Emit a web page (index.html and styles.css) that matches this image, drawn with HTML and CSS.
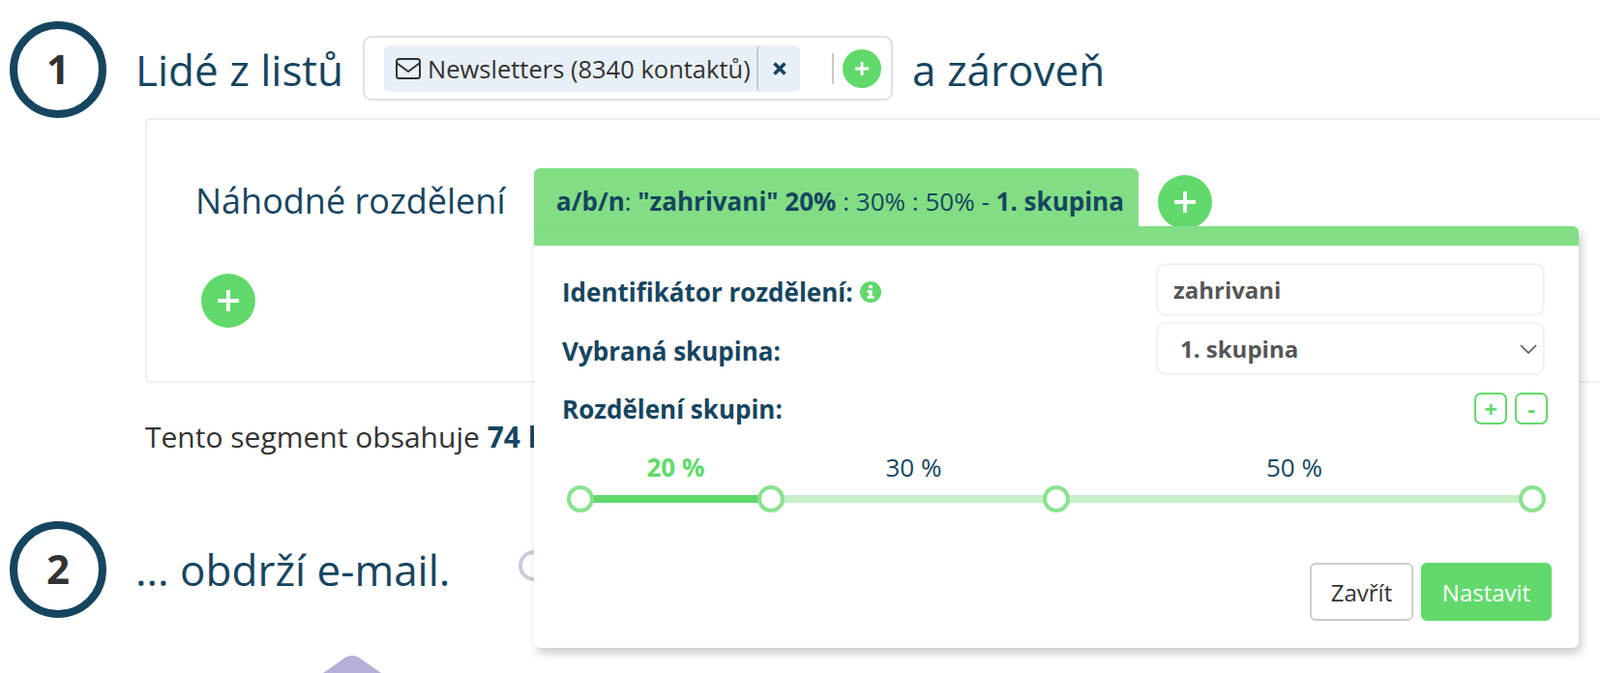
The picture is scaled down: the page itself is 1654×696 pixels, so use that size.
FILE: index.html
```html
<!DOCTYPE html>
<html lang="cs">
<head>
  <meta charset="UTF-8">
  <title>Segment</title>
  <link rel="stylesheet" href="styles.css">
</head>
<body>

<div class="step step-first">
  <div class="step-num">1</div>
  <h2 class="step-title">Lidé z listů</h2>
  <div class="list-box">
    <div class="chip">
      <span class="chip-label">
        <svg class="chip-icon" viewBox="0 0 26 22"><rect x="1" y="1" width="24" height="20" rx="2.5" fill="none" stroke="#333" stroke-width="2"/><path d="M1.5 5.5 L13 14 L24.5 5.5" fill="none" stroke="#333" stroke-width="2"/></svg>
        Newsletters (8340 kontaktů)
      </span>
      <span class="chip-close">
        <svg viewBox="0 0 14 14" width="14" height="14"><path d="M1.5 1.5 L12.5 12.5 M12.5 1.5 L1.5 12.5" stroke="#16455f" stroke-width="3.6"/></svg>
      </span>
    </div>
    <span class="list-sep"></span>
    <button class="add-btn add-small">
      <svg viewBox="0 0 16 16" width="16" height="16"><path d="M8 1 V15 M1 8 H15" stroke="#fff" stroke-width="3"/></svg>
    </button>
  </div>
  <h2 class="step-title">a zároveň</h2>
</div>

<div class="card">
  <div class="card-row">
    <span class="card-title">Náhodné rozdělení</span>
    <div class="tab">
      <b>a/b/n</b>: <b>"zahrivani" 20%</b> : 30% : 50% - <b>1. skupina</b>
    </div>
    <button class="add-btn add-big">
      <svg viewBox="0 0 24 24" width="24" height="24"><path d="M12 1 V23 M1 12 H23" stroke="#fff" stroke-width="4"/></svg>
    </button>
  </div>
  <button class="add-btn add-big add-left">
    <svg viewBox="0 0 24 24" width="24" height="24"><path d="M12 1 V23 M1 12 H23" stroke="#fff" stroke-width="4"/></svg>
  </button>
</div>

<p class="summary">Tento segment obsahuje <b>74 lidí</b></p>

<div class="step step-second">
  <div class="step-num">2</div>
  <h2 class="step-title">... obdrží e-mail.</h2>
  <span class="radio"></span>
</div>

<div class="mail-art">
  <svg viewBox="0 0 90 18" width="90" height="18"><path d="M15 18 L38 2 Q45 -2 52 2 L75 18 Z" fill="#b4b0d8"/></svg>
</div>

<!-- popup nastaveni rozdeleni -->
<div class="popup">
  <div class="popup-row">
    <label class="popup-label">Identifikátor rozdělení:
      <svg class="info-icon" viewBox="0 0 20 20" width="22" height="22"><circle cx="10" cy="10" r="10" fill="#62d96b"/><rect x="8.2" y="3.5" width="3.6" height="3.2" rx="1" fill="#fff"/><path d="M6.8 8.2 H11.6 V13.8 H13.2 V16.2 H6.8 V13.8 H8.4 V10.6 H6.8 Z" fill="#fff"/></svg>
    </label>
    <input class="popup-field" value="zahrivani">
  </div>
  <div class="popup-row">
    <label class="popup-label">Vybraná skupina:</label>
    <div class="popup-field popup-select">
      1. skupina
      <svg viewBox="0 0 18 10" width="18" height="10"><path d="M1 1 L9 9 L17 1" fill="none" stroke="#555" stroke-width="1.6"/></svg>
    </div>
  </div>
  <div class="popup-row popup-row-groups">
    <label class="popup-label">Rozdělení skupin:</label>
    <div class="mini-btns">
      <button class="mini-btn">+</button>
      <button class="mini-btn">-</button>
    </div>
  </div>

  <div class="slider">
    <div class="slider-labels">
      <span class="pct pct-active" style="width: 20%">20 %</span>
      <span class="pct" style="width: 30%">30 %</span>
      <span class="pct" style="width: 50%">50 %</span>
    </div>
    <div class="track">
      <div class="track-on" style="width: 20%"></div>
      <span class="handle" style="left: 0%"></span>
      <span class="handle" style="left: 20%"></span>
      <span class="handle" style="left: 50%"></span>
      <span class="handle" style="left: 100%"></span>
    </div>
  </div>

  <div class="popup-actions">
    <button class="btn btn-close">Zavřít</button>
    <button class="btn btn-save">Nastavit</button>
  </div>
</div>

</body>
</html>
```

FILE: styles.css
```css
html, body { height: 696px; overflow: hidden; }
body { margin: 0; background: #fff; color: #333; font-family: "Open Sans", sans-serif; position: relative; }
b { font-weight: 700; }
button { font-family: inherit; cursor: pointer; }

.step { display: flex; align-items: center; padding-left: 10px; height: 100px; }
.step-first { padding-top: 22px; }
.step-second { margin-top: 70px; }
.step-num { width: 100px; height: 100px; box-sizing: border-box; border: 8px solid #16455f; border-radius: 50%; padding-bottom: 4px; display: flex; align-items: center; justify-content: center; font-size: 42px; font-weight: 700; color: #333; flex: none; }
.step-title { margin: 0 0 0 30px; font-size: 44px; font-weight: 400; color: #16455f; white-space: nowrap; }

.list-box { display: flex; align-items: center; box-sizing: border-box; width: 548px; height: 67px; margin: -3px 0 0 20px; padding: 0 9px 0 20px; border: 2px solid #e0e0e0; border-radius: 9px; }
.list-box + .step-title { margin-left: 20px; }
.chip { display: flex; align-items: stretch; height: 48px; width: 430px; background: #e8f0f7; border-radius: 5px; font-size: 25.5px; color: #333; white-space: nowrap; flex: none; }
.chip-label { display: flex; align-items: center; gap: 7px; padding-left: 12px; width: 385px; box-sizing: border-box; }
.chip-icon { width: 26px; height: 22px; flex: none; }
.chip-close { display: flex; align-items: center; justify-content: center; flex: 1; border-left: 2px solid #c4c9cd; border-radius: 5px; }
.list-sep { width: 2px; height: 32px; background: #ccc; margin-left: 33px; flex: none; }
.add-btn { border: none; padding: 0; border-radius: 50%; background: #62d96b; display: flex; align-items: center; justify-content: center; flex: none; }
.add-small { width: 40px; height: 40px; margin-left: 9px; }
.add-big { width: 56px; height: 56px; }

.card { box-sizing: border-box; height: 274px; margin-left: 150px; margin-right: -20px; border: 2px solid #eee; border-radius: 6px; padding: 50px 0 0 50px; }
.card-row { display: flex; align-items: center; height: 60px; }
.card-title { font-size: 36px; color: #16455f; white-space: nowrap; width: 350px; flex: none; padding-top: 7px; }
.tab { box-sizing: border-box; width: 625px; height: 60px; background: #82de84; border-radius: 6px 6px 0 0; padding: 7px 0 0 23px; display: flex; align-items: center; font-size: 26px; color: #16455f; white-space: pre; flex: none; }
.card-row .add-big { margin: 10px 0 0 20px; }
.add-left { margin: 49px 0 0 6px; }

.summary { margin: 39px 0 0 150px; height: 34px; line-height: 34px; font-size: 30px; color: #333; white-space: nowrap; }
.summary b { color: #16455f; }

.radio { width: 32px; height: 32px; box-sizing: border-box; border: 4px solid #c5ced9; border-radius: 50%; margin: -8px 0 0 71px; flex: none; }

.mail-art { position: absolute; left: 319px; top: 678px; line-height: 0; }

.popup { position: absolute; left: 552px; top: 234px; width: 1080px; height: 436px; box-sizing: border-box; background: #fff; border-top: 20px solid #82de84; border-radius: 0 6px 6px 6px; box-shadow: 3px 6px 10px rgba(0, 0, 0, .2); padding: 19px 36px 0 29px; }
.popup-row { display: flex; align-items: center; justify-content: space-between; height: 53px; margin-bottom: 8px; }
.popup-row-groups { height: 33px; margin: 19px -4px 0 0; }
.popup-label { display: flex; align-items: center; gap: 7px; font-size: 26px; font-weight: 700; color: #16455f; padding-top: 5px; }
.popup-row-groups .popup-label { padding-top: 0; }
.info-icon { flex: none; }
.popup-field { box-sizing: border-box; width: 400px; height: 53px; border: 1px solid #eee; border-radius: 9px; box-shadow: 0 0 3px rgba(0, 0, 0, .1); background: #fff; padding: 0 16px; font: 700 24px "Open Sans", sans-serif; color: #555; outline: none; }
.popup-select { display: flex; align-items: center; justify-content: space-between; padding: 0 6px 0 23px; }
.mini-btns { display: flex; gap: 8px; }
.mini-btn { width: 34px; height: 33px; padding: 0; border: 2px solid #62d96b; border-radius: 7px; background: #fff; color: #62d96b; font-size: 24px; font-weight: 700; line-height: 1; }

.slider { margin: 26px 0 0 19px; width: 984px; }
.slider-labels { display: flex; height: 36px; }
.pct { text-align: center; font-size: 26px; line-height: 36px; color: #16455f; }
.pct-active { color: #62d96b; font-weight: 700; }
.track { position: relative; height: 8px; margin-top: 11px; background: #c6f0c8; }
.track-on { height: 8px; background: #62d96b; }
.handle { position: absolute; top: -10px; width: 28px; height: 28px; margin-left: -14px; box-sizing: border-box; border: 4px solid #8ae28f; border-radius: 50%; background: #fff; }

.popup-actions { display: flex; justify-content: flex-end; gap: 8px; margin: 62px -8px 0 0; }
.btn { box-sizing: border-box; height: 60px; border-radius: 6px; font-size: 24px; padding: 0; }
.btn-close { width: 107px; background: #fff; border: 2px solid #ccc; color: #333; }
.btn-save { width: 135px; background: #62d96b; border: 2px solid #62d96b; color: #fff; }
```
